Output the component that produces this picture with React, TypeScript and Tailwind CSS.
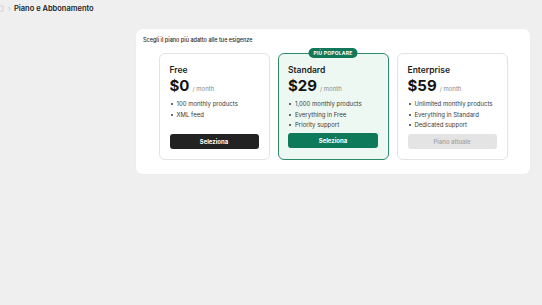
import { ChevronRight, PanelLeft } from 'lucide-react'

type Plan = {
  name: string
  price: string
  features: string[]
  cta: string
  variant: 'dark' | 'green' | 'current'
  popular?: boolean
}

const plans: Plan[] = [
  { name: 'Free', price: '$0', features: ['100 monthly products', 'XML feed'], cta: 'Seleziona', variant: 'dark' },
  {
    name: 'Standard',
    price: '$29',
    features: ['1,000 monthly products', 'Everything in Free', 'Priority support'],
    cta: 'Seleziona',
    variant: 'green',
    popular: true,
  },
  {
    name: 'Enterprise',
    price: '$59',
    features: ['Unlimited monthly products', 'Everything in Standard', 'Dedicated support'],
    cta: 'Piano attuale',
    variant: 'current',
  },
]

function PlanCard({ plan }: { plan: Plan }) {
  const buttonClass =
    plan.variant === 'dark'
      ? 'bg-[#222222] text-white'
      : plan.variant === 'green'
        ? 'bg-[#0e7a5a] text-white'
        : 'bg-[#e4e4e4] text-[#a0a0a0] font-medium'

  return (
    <div
      className={
        plan.popular
          ? 'relative flex w-[111px] flex-col rounded-[6px] border-[1.5px] border-[#2f8a6b] bg-[#eef8f3] px-[9.5px] pt-[10px] pb-[11px]'
          : 'relative flex w-[111px] flex-col rounded-[6px] border border-[#e3e3e3] bg-white px-[10px] pt-[10px] pb-[10px]'
      }
    >
      {plan.popular && (
        <div className="absolute left-1/2 top-[-6px] -translate-x-1/2 rounded-full bg-[#13785a] px-[5px] py-[2px] text-[5px] font-bold leading-[6px] tracking-[0.2px] text-white whitespace-nowrap">
          PIÙ POPOLARE
        </div>
      )}
      <div className="text-[8.5px] font-semibold leading-[12px] text-[#1d1d1d]">{plan.name}</div>
      <div className="mt-[1px] flex items-baseline gap-[3px]">
        <span className="text-[15px] font-bold leading-[18px] text-[#141414]">{plan.price}</span>
        <span className="text-[6px] text-[#8a8a8a]">/ month</span>
      </div>
      <ul className="mt-[4px] mb-[2px] flex flex-col">
        {plan.features.map((f) => (
          <li key={f} className="flex items-center gap-[4px] pl-[1px] text-[6px] leading-[10.5px] text-[#3a3a3a]">
            <span className="h-[2px] w-[2px] rounded-full bg-[#3a3a3a]" />
            {f}
          </li>
        ))}
      </ul>
      <button className={`mt-auto h-[15px] w-full rounded-[3px] text-[6px] font-bold ${buttonClass}`}>
        {plan.cta}
      </button>
    </div>
  )
}

export default function App() {
  return (
    <div className="min-h-[305px] w-full bg-[#efefef] font-['Inter',sans-serif]">
      {/* Breadcrumb */}
      <div className="flex h-[17px] items-center">
        <PanelLeft className="ml-[-3px] h-[7px] w-[7px] text-[#c0c0c0]" strokeWidth={2} />
        <ChevronRight className="ml-[3px] h-[5px] w-[5px] text-[#9a9a9a]" strokeWidth={2.5} />
        <span className="ml-[2px] text-[7.5px] font-semibold text-[#1e1e1e]">Piano e Abbonamento</span>
      </div>

      <div className="ml-[136px] mr-[12px] mt-[12px] rounded-[6px] bg-white px-[7px] pt-[7px] pb-[14px] shadow-[0_0_1px_rgba(0,0,0,0.08)]">
        <div className="text-[5.5px] font-medium leading-[8px] text-[#2a2a2a]">
          Scegli il piano più adatto alle tue esigenze
        </div>
        <div className="mt-[9px] flex items-stretch justify-center gap-[8px]">
          {plans.map((p) => (
            <PlanCard key={p.name} plan={p} />
          ))}
        </div>
      </div>
    </div>
  )
}
